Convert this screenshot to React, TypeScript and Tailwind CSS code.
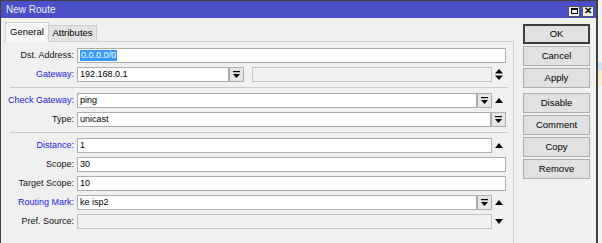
import type { ReactNode } from 'react'

const FONT = { fontFamily: '"Liberation Sans", Arial, sans-serif' }

function DropBtn() {
  return (
    <div className="w-[15px] h-[15px] shrink-0 border border-[#adadad] bg-[#e6e6e6] flex items-center justify-center">
      <svg width="9" height="9" viewBox="0 0 9 9">
        <rect x="1" y="1" width="7" height="1.2" fill="#000" />
        <polygon points="1,4 8,4 4.5,8" fill="#000" />
      </svg>
    </div>
  )
}

function Up() {
  return (
    <svg width="8" height="5" viewBox="0 0 8 5">
      <polygon points="0,5 8,5 4,0" fill="#000" />
    </svg>
  )
}

function Down() {
  return (
    <svg width="8" height="5" viewBox="0 0 8 5">
      <polygon points="0,0 8,0 4,5" fill="#000" />
    </svg>
  )
}

function UpDown() {
  return (
    <svg width="8" height="11" viewBox="0 0 8 11">
      <polygon points="0,4.5 8,4.5 4,0" fill="#000" />
      <polygon points="0,6.5 8,6.5 4,11" fill="#000" />
    </svg>
  )
}

function Field({ value, disabled, selected }: { value?: string; disabled?: boolean; selected?: boolean }) {
  return (
    <div
      className={`flex-1 min-w-0 h-[15px] border flex items-center pl-[2px] text-[9px] text-black leading-none ${
        disabled ? 'bg-[#f0f0f0] border-[#c4c4c4]' : 'bg-white border-[#adadad]'
      }`}
    >
      {selected ? <span className="bg-[#3399ff] text-white px-px py-[1px]">{value}</span> : value}
    </div>
  )
}

function Row({ label, blue, children }: { label: string; blue?: boolean; children: ReactNode }) {
  return (
    <div className="flex items-center h-[15px]">
      <div className={`w-[71px] text-right text-[9px] leading-none ${blue ? 'text-[#2323e0]' : 'text-[#111]'}`}>
        {label}:
      </div>
      <div className="ml-[3px] w-[429px] flex items-center">{children}</div>
    </div>
  )
}

function Icon({ children }: { children?: ReactNode }) {
  return <div className="w-[14px] shrink-0 flex items-center justify-center">{children}</div>
}

function Btn({ label, main }: { label: string; main?: boolean }) {
  return (
    <div
      className={`w-[67px] h-[20px] flex items-center justify-center text-[9.5px] text-black bg-[#e1e1e1] ${
        main ? 'border-2 border-[#3d3d3d]' : 'border border-[#adadad]'
      }`}
    >
      {label}
    </div>
  )
}

export default function App() {
  return (
    <div className="w-[602px] h-[243px] flex overflow-hidden bg-white" style={FONT}>
      <div className="w-[598px] h-full flex flex-col border-l border-t border-r-2 border-[#404040]">
        <div className="h-[17px] bg-[#4a4fc8] flex items-center justify-between pl-[5px] pr-[2px]">
          <span className="text-white/95 text-[10px]">New Route</span>
          <div className="flex gap-[2px] mt-[3px]">
            <div className="w-[12px] h-[11px] bg-[#f0f0f0] border border-[#555] flex items-center justify-center">
              <div className="w-[7px] h-[6px] border border-black border-t-2" />
            </div>
            <div className="w-[12px] h-[11px] bg-[#f0f0f0] border border-[#555] flex items-center justify-center text-[10px] font-bold leading-none text-black">
              ✕
            </div>
          </div>
        </div>

        <div className="flex-1 flex bg-[#f0f0f0]">
          <div className="w-[513px] flex flex-col pl-[2px]">
            <div className="h-[23px] flex items-end pl-[2px] text-[9.5px] text-black">
              <div className="w-[44px] h-[20px] bg-[#f7f7f7] border border-b-0 border-[#cfcfcf] flex items-center justify-center relative top-px z-10">
                General
              </div>
              <div className="w-[48px] h-[16px] bg-[#e3e3e3] border border-b-0 border-l-0 border-[#cfcfcf] flex items-center justify-center">
                Attributes
              </div>
            </div>
            <div className="flex-1 border-t border-r border-[#cfcfcf] pt-[6px] flex flex-col gap-[4px]">
              <Row label="Dst. Address">
                <Field value="0.0.0.0/0" selected />
              </Row>
              <Row label="Gateway" blue>
                <div className="w-[152px] flex">
                  <Field value="192.168.0.1" />
                </div>
                <DropBtn />
                <div className="w-[8px]" />
                <Field disabled />
                <Icon>
                  <UpDown />
                </Icon>
              </Row>
              <div className="ml-[7px] mr-[5px] h-px bg-[#c9c9c9] my-[1px]" />
              <Row label="Check Gateway" blue>
                <Field value="ping" />
                <DropBtn />
                <Icon>
                  <Up />
                </Icon>
              </Row>
              <Row label="Type">
                <Field value="unicast" />
                <DropBtn />
              </Row>
              <div className="ml-[7px] mr-[5px] h-px bg-[#c9c9c9] my-[1px]" />
              <Row label="Distance" blue>
                <Field value="1" />
                <Icon>
                  <Up />
                </Icon>
              </Row>
              <Row label="Scope">
                <Field value="30" />
              </Row>
              <Row label="Target Scope">
                <Field value="10" />
              </Row>
              <Row label="Routing Mark" blue>
                <Field value="ke isp2" />
                <DropBtn />
                <Icon>
                  <Up />
                </Icon>
              </Row>
              <Row label="Pref. Source">
                <Field disabled />
                <Icon>
                  <Down />
                </Icon>
              </Row>
            </div>
          </div>
          <div className="flex-1 flex flex-col pl-[9px] pt-[6px]">
            <div className="flex flex-col gap-[2px]">
              <Btn label="OK" main />
              <Btn label="Cancel" />
              <Btn label="Apply" />
            </div>
            <div className="flex flex-col gap-[2px] mt-[5px]">
              <Btn label="Disable" />
              <Btn label="Comment" />
              <Btn label="Copy" />
              <Btn label="Remove" />
            </div>
          </div>
        </div>
      </div>
      <div className="flex-1 flex flex-col bg-[#f4f4f4]">
        <div className="h-[62px]" />
        <div className="h-[8px] bg-[#cde3f7]" />
        <div className="h-[16px] bg-[#fbe9d2]" />
      </div>
    </div>
  )
}
